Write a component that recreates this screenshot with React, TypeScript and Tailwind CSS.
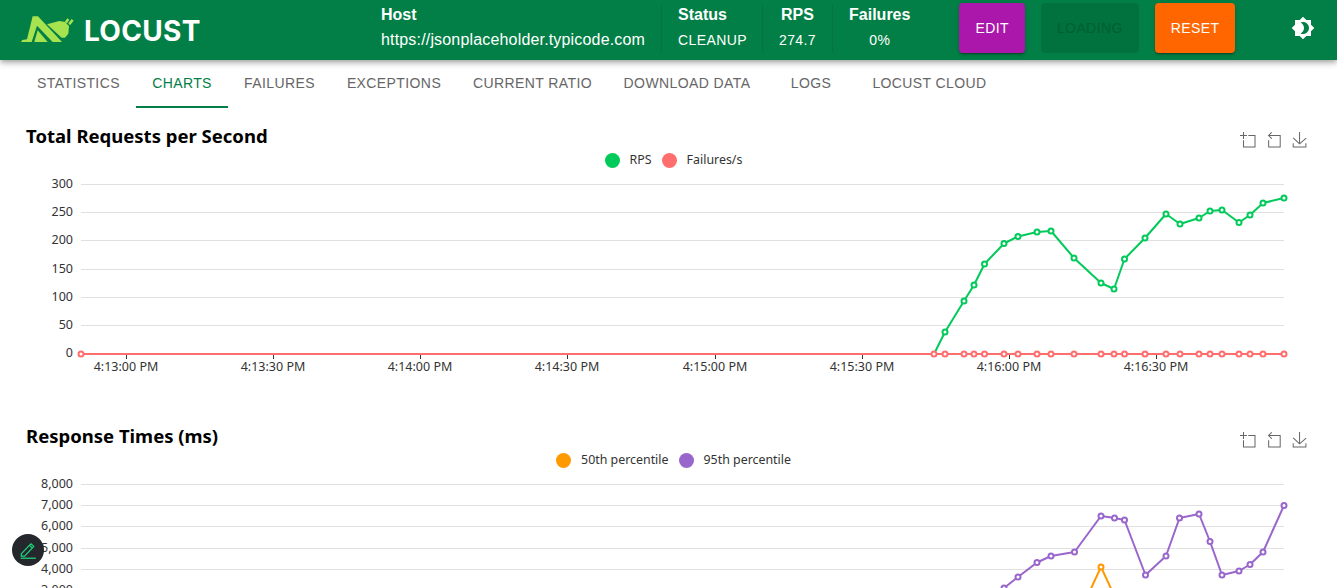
import React from "react";

const tabs: [string, number][] = [
  ["STATISTICS", 115],
  ["CHARTS", 92],
  ["FAILURES", 103],
  ["EXCEPTIONS", 126],
  ["CURRENT RATIO", 151],
  ["DOWNLOAD DATA", 158],
  ["LOGS", 90],
  ["LOCUST CLOUD", 147],
];

const timeLabels: [string, number][] = [
  ["4:13:00 PM", 126],
  ["4:13:30 PM", 273],
  ["4:14:00 PM", 420],
  ["4:14:30 PM", 567],
  ["4:15:00 PM", 715],
  ["4:15:30 PM", 862],
  ["4:16:00 PM", 1009],
  ["4:16:30 PM", 1156],
];

const green: [number, number][] = [
  [934, 354], [945, 332], [964, 301], [974, 285], [984.5, 264], [1004, 243.5], [1018, 236.5],
  [1037, 232], [1051, 231], [1074, 258], [1101, 283], [1114, 289], [1124.5, 259], [1145, 238],
  [1166, 214], [1180, 224], [1199, 218], [1210, 211], [1222, 210], [1239, 222.5], [1250, 215],
  [1263, 203], [1284, 198],
];

const purple: [number, number][] = [
  [1004, 588], [1018, 577], [1037, 562.5], [1051, 556], [1074.5, 552], [1101, 516], [1114.5, 518],
  [1124.5, 520], [1145.5, 575], [1166, 556], [1179.5, 518], [1199, 514], [1210, 541.5], [1222, 575],
  [1239, 571], [1250, 564.5], [1263, 552], [1284, 505.5],
];

const orange: [number, number][] = [[1081, 610], [1101, 567], [1121, 610]];

const pts = (p: [number, number][]) => p.map(([x, y]) => `${x},${y}`).join(" ");

function Series({ points, color, dots }: { points: [number, number][]; color: string; dots: [number, number][] }) {
  return (
    <g>
      <polyline points={pts(points)} fill="none" stroke={color} strokeWidth={2} strokeLinejoin="round" />
      {dots.map(([x, y]) => (
        <circle key={x} cx={x} cy={y} r={2.5} fill="#fff" stroke={color} strokeWidth={2} />
      ))}
    </g>
  );
}

function Toolbox() {
  const cls = "w-[15px] h-[15px] overflow-visible";
  const s = { fill: "none", stroke: "#666", strokeWidth: 3.9 };
  return (
    <div className="flex gap-[11px] pt-[12px]">
      <svg viewBox="0 0 58 58" className={cls}>
        <path d="M0,13.5h26.9 M13.5,26.9V0 M32.1,13.5H58V58H13.5 V32.1" {...s} />
      </svg>
      <svg viewBox="0 0 58 58" className={cls}>
        <path d="M22,1.4L9.9,13.5l12.3,12.3 M10.3,13.5H54.9v44.6 H10.3v-26" {...s} />
      </svg>
      <svg viewBox="0 0 58 58" className={cls}>
        <path d="M4.7,22.9L29.3,45.5L54.7,23.4M4.6,43.6L4.6,58L53.8,58L53.8,43.6M29.2,45.1L29.2,0" {...s} />
      </svg>
    </div>
  );
}

function Legend({ items }: { items: [string, string][] }) {
  return (
    <div className="flex justify-center gap-[10px] h-[14px] items-center text-[12.4px] leading-[14px] text-[#333] pl-[10px]">
      {items.map(([name, color]) => (
        <div key={name} className="flex items-center gap-[10px]">
          <span className="w-[15px] h-[15px] rounded-full" style={{ background: color }} />
          <span>{name}</span>
        </div>
      ))}
    </div>
  );
}

function Chart({
  title,
  legend,
  top,
  yLabels,
  children,
}: {
  title: string;
  legend: [string, string][];
  top: number;
  yLabels: [string, number][];
  children?: React.ReactNode;
}) {
  return (
    <section className="h-[300px] shrink-0 font-['Noto_Sans',sans-serif]">
      <div className="flex justify-between items-start h-[33px] pl-[26px] pr-[30px]">
        <h2 className="text-[18.5px] leading-[32px] font-bold text-black">{title}</h2>
        <Toolbox />
      </div>
      <Legend items={legend} />
      <svg viewBox={`0 ${top} 1337 253`} className="w-[1337px] h-[253px] block text-[12.5px]">
        {yLabels.map(([label, y]) => (
          <g key={label}>
            <line x1={81} x2={1284} y1={y} y2={y} stroke="#e0e0e0" strokeWidth={1} />
            <text x={73} y={y + 3} textAnchor="end" fill="#333">
              {label}
            </text>
          </g>
        ))}
        {children}
      </svg>
    </section>
  );
}

function Logo() {
  return (
    <div className="flex items-center">
      <svg viewBox="0 0 210 120" className="w-[70px] h-[40px] shrink-0">
        <g fill="#a6e34f">
          <path d="M53,16 L69,16 L141,93 L113,93 L66,44 L50,93 L18,93 L22,87 L36,85 Z" />
          <path d="M68,58 L98,93 L58,93 Z" />
          <path d="M96,40 L133,30 L150,33 L162,45 L160,68 L150,80 L140,80 Z" />
          <path d="M149,33 L157,22 L163,26 L156,37 Z" />
          <path d="M160,37 L170,24 L176,29 L165,43 Z" />
        </g>
      </svg>
      <span className="-ml-[1px] font-['Inter',sans-serif] font-bold text-[28px] leading-none text-white tracking-[0.3px]">
        LOCUST
      </span>
    </div>
  );
}

function Stat({ label, value, center }: { label: string; value: string; center?: boolean }) {
  return (
    <div className={`flex flex-col px-4 h-[50px] ${center ? "items-center" : "items-start pr-[15px]"}`}>
      <span className="text-[16px] leading-[22px] font-bold">{label}</span>
      <span className="text-[14px] leading-[28px] tracking-[0.4px]">{value}</span>
    </div>
  );
}

const divider = "w-px h-[48px] bg-[#0a7040]";
const button =
  "h-[50px] px-4 rounded-[4px] text-[14px] tracking-[0.4px] shadow-[0_3px_1px_-2px_rgba(0,0,0,0.2),0_2px_2px_0_rgba(0,0,0,0.14),0_1px_5px_0_rgba(0,0,0,0.12)]";

export default function App() {
  return (
    <div className="relative h-screen overflow-hidden bg-white font-['Liberation_Sans',Arial,sans-serif]">
      <header className="relative z-10 h-[60px] flex items-start bg-[#027f46] text-white pl-[15px] shadow-[0_2px_4px_-1px_rgba(0,0,0,0.2),0_4px_5px_0_rgba(0,0,0,0.14),0_1px_10px_0_rgba(0,0,0,0.12)]">
        <div className="h-[60px] w-[366px] flex items-center pt-[1px]">
          <Logo />
        </div>
        <div className="flex items-center pt-[3px] h-[54px]">
          <div className="flex flex-col h-[50px] pr-[16px]">
            <span className="text-[16px] leading-[22px] font-bold">Host</span>
            <span className="text-[16px] leading-[28px] tracking-[0.17px]">https://jsonplaceholder.typicode.com</span>
          </div>
          <div className={divider} />
          <Stat label="Status" value="CLEANUP" />
          <div className={divider} />
          <Stat label="RPS" value="274.7" center />
          <div className={divider} />
          <Stat label="Failures" value="0%" center />
        </div>
        <div className="flex gap-4 ml-[33px] pt-[3px]">
          <button className={`${button} bg-[#aa17aa] text-white`}>EDIT</button>
          <button className={`${button} bg-[#01713e] text-[#00602f] shadow-none`}>LOADING</button>
          <button className={`${button} bg-[#ff6600] text-white`}>RESET</button>
        </div>
        <button className="ml-[48px] mt-[8px] p-2">
          <svg viewBox="0 0 24 24" className="w-6 h-6 block" fill="#fff">
            <path d="M20 8.69V4h-4.69L12 .69 8.69 4H4v4.69L.69 12 4 15.31V20h4.69L12 23.31 15.31 20H20v-4.69L23.31 12 20 8.69zM12 18c-.89 0-1.74-.2-2.5-.55C11.56 16.5 13 14.42 13 12s-1.44-4.5-3.5-5.45C10.26 6.2 11.11 6 12 6c3.31 0 6 2.69 6 6s-2.69 6-6 6z" />
          </svg>
        </button>
      </header>

      <nav className="flex h-[48px] pl-[21px]">
        {tabs.map(([t, w]) => (
          <div
            key={t}
            style={{ width: w }}
            className={`shrink-0 flex items-center justify-center text-[14px] tracking-[0.4px] ${
              t === "CHARTS" ? "text-[#027f46] border-b-2 border-[#027f46]" : "text-[#666] pb-[2px]"
            }`}
          >
            {t}
          </div>
        ))}
      </nav>

      <main className="pt-[12px]">
        <Chart
          title="Total Requests per Second"
          top={167}
          legend={[
            ["RPS", "#00ca5a"],
            ["Failures/s", "#ff6d6d"],
          ]}
          yLabels={[
            ["300", 184.5],
            ["250", 212.5],
            ["200", 240.5],
            ["150", 269.5],
            ["100", 297.5],
            ["50", 325.5],
            ["0", 354],
          ]}
        >
          {timeLabels.map(([label, x]) => (
            <g key={label}>
              <line x1={x + 0.5} x2={x + 0.5} y1={354} y2={359} stroke="#333" />
              <text x={x} y={371} textAnchor="middle" fill="#333">
                {label}
              </text>
            </g>
          ))}
          <Series points={[[81, 354], ...green]} color="#00ca5a" dots={green.slice(1)} />
          <Series
            points={[[81, 354], ...green.map(([x]) => [x, 354] as [number, number])]}
            color="#ff6d6d"
            dots={[[81, 354], ...green.map(([x]) => [x, 354] as [number, number])]}
          />
        </Chart>
        <Chart
          title="Response Times (ms)"
          top={467}
          legend={[
            ["50th percentile", "#ff9900"],
            ["95th percentile", "#9966cc"],
          ]}
          yLabels={[
            ["8,000", 484.5],
            ["7,000", 505.5],
            ["6,000", 526.5],
            ["5,000", 548.5],
            ["4,000", 569.5],
            ["3,000", 590.5],
          ]}
        >
          <Series points={orange} color="#ff9900" dots={[orange[1]]} />
          <Series points={purple} color="#9966cc" dots={purple} />
        </Chart>
      </main>

      <button className="absolute left-[12px] top-[534px] z-20 w-8 h-8 rounded-full bg-[#24282c] flex items-center justify-center">
        <svg viewBox="0 0 16 16" className="w-[18px] h-[18px]" fill="none" stroke="#1fd67f" strokeWidth={1.1} strokeLinejoin="round">
          <path d="M2 11.5 L10.5 2.5 L13.2 4.8 L5 13.5 L2 13.5 Z" />
          <path d="M9.3 3.9 L11.9 6.2" />
          <path d="M1.5 15.3 H15" />
        </svg>
      </button>
    </div>
  );
}
